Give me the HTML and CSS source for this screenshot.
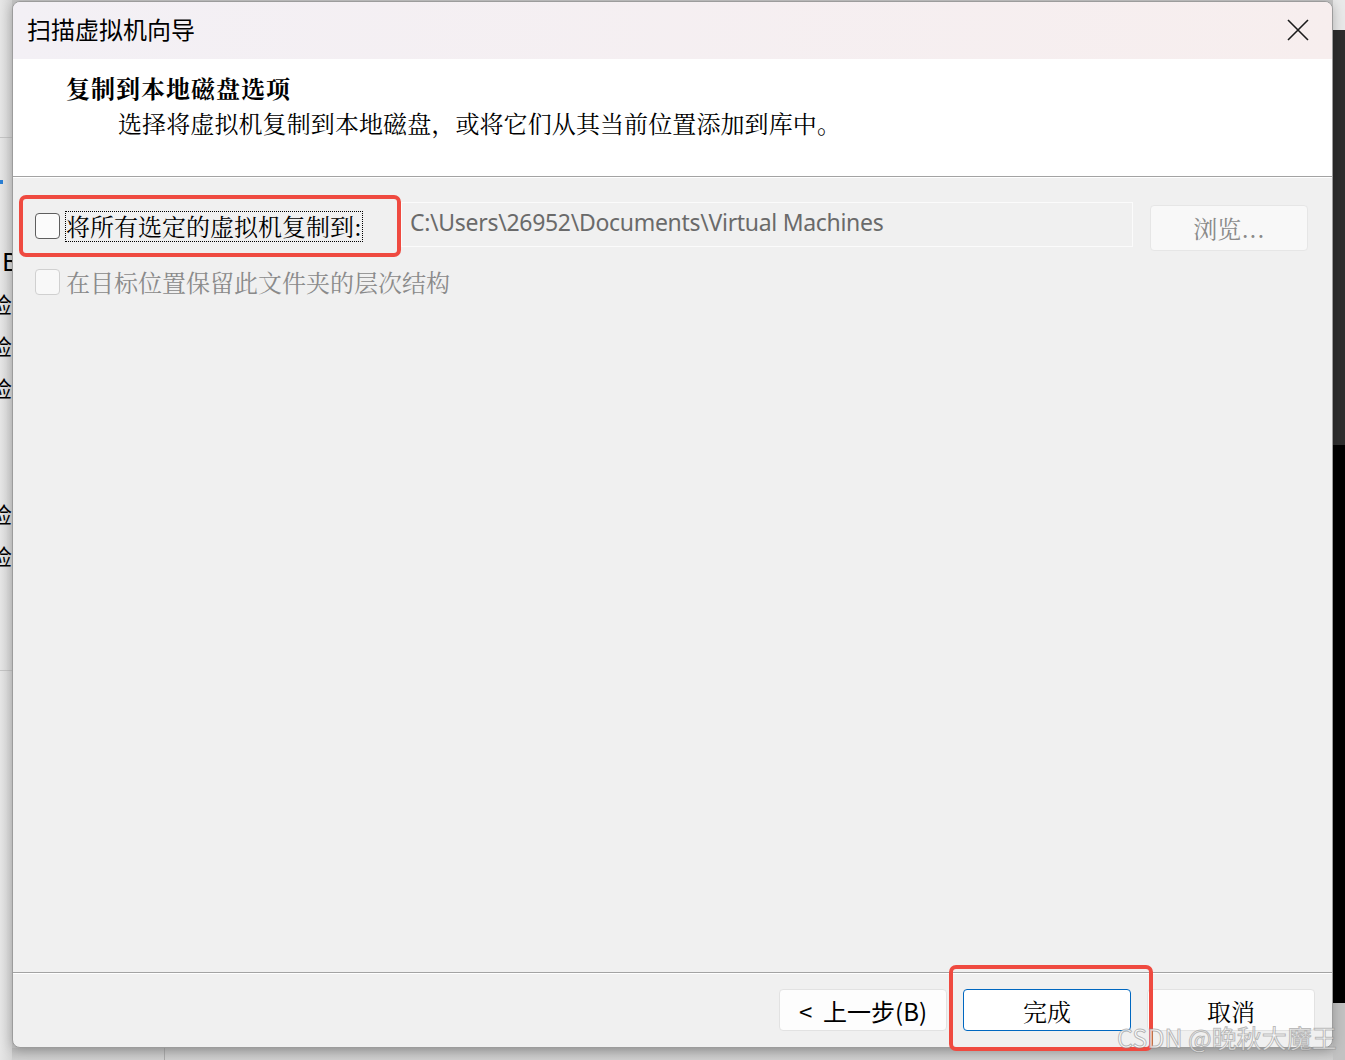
FILE: index.html
```html
<!DOCTYPE html>
<html lang="zh-CN">
<head>
    <meta charset="UTF-8">
    <title>扫描虚拟机向导</title>
    <link rel="stylesheet" href="styles.css">
</head>
<body>
    <aside class="backdrop-left">
        <div class="bl-rule"></div>
        <div class="bl-dot"></div>
        <ul class="bl-items">
            <li class="bl-b">B</li>
            <li>检</li>
            <li>检</li>
            <li>检</li>
            <li></li>
            <li></li>
            <li>检</li>
            <li>检</li>
        </ul>
        <div class="bl-rule bl-rule-low"></div>
    </aside>

    <div class="stage">
        <div class="dialog">
            <div class="titlebar">
                <span class="title">扫描虚拟机向导</span>
                <span class="close">
                    <svg width="22" height="22" viewBox="0 0 22 22">
                        <path d="M1 1 L21 21 M21 1 L1 21" stroke="#1b1b1b" stroke-width="1.6" fill="none"/>
                    </svg>
                </span>
            </div>

            <div class="wizard-head">
                <h1>复制到本地磁盘选项</h1>
                <p>选择将虚拟机复制到本地磁盘，或将它们从其当前位置添加到库中。</p>
            </div>

            <div class="wizard-body">
                <div class="copy-row">
                    <label class="check marked">
                        <span class="box"></span>
                        <span class="focus">将所有选定的虚拟机复制到:</span>
                    </label>
                    <div class="path">C:\Users\26952\Documents\Virtual Machines</div>
                    <button class="btn browse">浏览...</button>
                </div>
                <label class="check disabled">
                    <span class="box"></span>
                    <span>在目标位置保留此文件夹的层次结构</span>
                </label>
            </div>

            <div class="wizard-foot">
                <button class="btn back">&lt;&nbsp; 上一步(B)</button>
                <button class="btn default highlight">完成</button>
                <button class="btn">取消</button>
            </div>
        </div>
        <div class="backdrop-bottom"></div>
    </div>

    <aside class="backdrop-right">
        <div class="br-top"></div>
        <div class="br-dark"></div>
        <div class="br-black"></div>
        <div class="br-low"></div>
    </aside>

    <div class="watermark">CSDN @晚秋大魔王</div>
</body>
</html>
```

FILE: styles.css
```css
body {
    margin: 0;
    width: 1345px;
    height: 1060px;
    overflow: hidden;
    display: grid;
    grid-template-columns: 12px 1321px 12px;
    background-color: #c8c8c8;
    font-family: "Noto Sans CJK SC", sans-serif;
    color: #000000;
    position: relative;
}

/* window behind the dialog */
.backdrop-left {
    background: linear-gradient(to right, #e6e6e6, #d6d6d6);
    overflow: hidden;
    display: flex;
    flex-direction: column;
}

.bl-rule {
    margin-top: 137px;
    height: 1px;
    background-color: #c4c4c4;
}

.bl-rule-low {
    margin-top: 94px;
}

.bl-dot {
    margin-top: 42px;
    width: 3px;
    height: 4px;
    background-color: #2a7fd4;
}

.bl-items {
    list-style: none;
    margin: 56px 0 0 -10px;
    padding: 0;
    width: 24px;
    font-size: 22px;
    line-height: 42px;
    height: 336px;
}

.bl-items li {
    height: 42px;
}

.bl-items .bl-b {
    padding-left: 12px;
    font-family: "Noto Sans", sans-serif;
    font-size: 26px;
}

.stage {
    display: flex;
    flex-direction: column;
}

.backdrop-bottom {
    flex: 1;
    background: linear-gradient(to right, transparent 152px, #a8a8a8 152px, #a8a8a8 153px, transparent 153px), linear-gradient(#bdbdbd, #cfcfcf);
}

.backdrop-right {
    display: flex;
    flex-direction: column;
}

.br-top {
    height: 30px;
    background-color: #e9e9e9;
}

.br-dark {
    height: 415px;
    background-color: #2e2e2e;
}

.br-black {
    height: 558px;
    background-color: #000000;
}

.br-low {
    flex: 1;
    background-color: #c2c2c2;
}

/* dialog */
.dialog {
    margin-top: 1px;
    height: 1045px;
    border: 1px solid #9c9c9c;
    border-radius: 8px;
    background-color: #f0f0f0;
    display: flex;
    flex-direction: column;
    box-shadow: 0 2px 12px rgba(0, 0, 0, 0.25);
    position: relative;
    z-index: 1;
}

.titlebar {
    height: 57px;
    box-sizing: border-box;
    display: flex;
    align-items: center;
    justify-content: space-between;
    padding: 0 23px 4px 14px;
    background: linear-gradient(to right, #f3f0f5, #f7eeee);
    border-radius: 7px 7px 0 0;
}

.title {
    font-size: 24px;
    line-height: 30px;
}

.close {
    display: flex;
    margin-top: 2px;
}

.wizard-head {
    height: 118px;
    box-sizing: border-box;
    background-color: #ffffff;
    padding: 14px 0 0 53px;
    border-bottom: 1px solid #a3a3a3;
    font-family: "Noto Serif CJK SC", "Noto Sans CJK SC", serif;
}

.wizard-head h1 {
    margin: 0;
    font-size: 24px;
    line-height: 30px;
    font-weight: bold;
    letter-spacing: 1px;
}

.wizard-head p {
    margin: 5px 0 0 52px;
    font-size: 24px;
    line-height: 30px;
    letter-spacing: 0.1px;
}

.wizard-body {
    flex: 1;
    border-top: 1px solid #ffffff;
    border-bottom: 1px solid #a3a3a3;
    padding: 17px 24px 0 6px;
    display: flex;
    flex-direction: column;
    font-family: "Noto Serif CJK SC", "Noto Sans CJK SC", serif;
}

.copy-row {
    display: flex;
    align-items: center;
}

.check {
    display: flex;
    align-items: center;
    gap: 6px;
    font-size: 24px;
    line-height: 28px;
}

.check .box {
    width: 23px;
    height: 24px;
    border: 1.5px solid #5e5e5e;
    border-radius: 4px;
    background-color: #fbfbfb;
}

.check.marked {
    width: 382px;
    height: 62px;
    box-sizing: border-box;
    border: 4px solid #ef4a40;
    border-radius: 7px;
    padding-left: 12px;
}

.check .focus {
    outline: 1px dotted #000000;
    outline-offset: 0;
    padding: 0 0 1px 0;
}

.check.disabled {
    margin: 11px 0 0 16px;
    color: #8a8a8a;
}

.check.disabled .box {
    border-color: #d0d0d0;
    background-color: #f8f8f8;
}

.path {
    flex: 1;
    height: 45px;
    box-sizing: border-box;
    margin-top: -3px;
    padding: 2px 8px 0 8px;
    border: 1px solid #fbfbfb;
    font-family: "Noto Sans", "Noto Sans CJK SC", sans-serif;
    font-size: 23px;
    line-height: 34px;
    letter-spacing: -0.3px;
    color: #6a6a6a;
}

.btn {
    width: 168px;
    height: 42px;
    border: 1px solid #e2e2e2;
    border-radius: 4px;
    background-color: #fdfdfd;
    font-family: "Noto Serif CJK SC", "Noto Sans CJK SC", serif;
    font-size: 24px;
    color: #000000;
    padding: 0;
}

.btn.browse {
    width: 158px;
    height: 46px;
    margin-left: 17px;
    margin-top: 3px;
    background-color: #f8f8f8;
    border-color: #e6e6e6;
    color: #8a8a8a;
}

.wizard-foot {
    height: 74px;
    box-sizing: border-box;
    border-top: 1px solid #ffffff;
    border-radius: 0 0 7px 7px;
    display: flex;
    justify-content: flex-end;
    gap: 16px;
    padding: 15px 17px 0 0;
}

.btn.back {
    font-family: "Noto Sans CJK SC", sans-serif;
}

.btn.default {
    border-color: #0067c0;
    background-color: #ffffff;
}

.highlight {
    position: relative;
}

.highlight::after {
    content: "";
    position: absolute;
    top: -25px;
    left: -15px;
    right: -23px;
    bottom: -21px;
    border: 4px solid #ef4a40;
    border-radius: 7px;
}

.watermark {
    position: absolute;
    left: 1117px;
    top: 1020px;
    z-index: 2;
    font-family: "Noto Sans CJK SC", sans-serif;
    font-size: 25px;
    line-height: 34px;
    color: rgba(255, 255, 255, 0.75);
    -webkit-text-stroke: 1px rgba(130, 130, 130, 0.55);
}
```
